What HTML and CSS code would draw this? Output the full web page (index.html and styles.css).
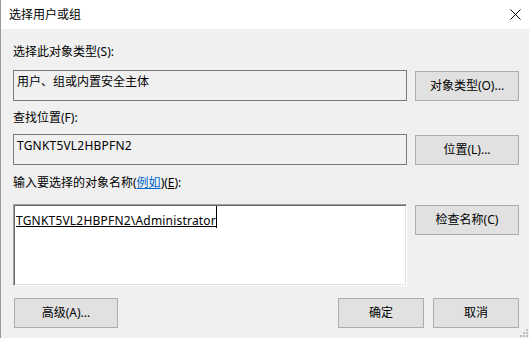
FILE: index.html
```html
<!DOCTYPE html>
<html lang="zh-CN">
<head>
<meta charset="utf-8">
<title>选择用户或组</title>
<link rel="stylesheet" href="styles.css">
</head>
<body>
<div class="window">
  <div class="titlebar">
    <span class="title">选择用户或组</span>
    <svg class="close" width="11" height="11" viewBox="0 0 11 11"><path d="M0.5 0.5 L10.5 10.5 M10.5 0.5 L0.5 10.5" stroke="#000" stroke-width="1" fill="none"/></svg>
  </div>
  <div class="content">
    <div class="label l1">选择此对象类型(S):</div>
    <div class="row r1">
      <div class="field">用户、组或内置安全主体</div>
      <button class="btn side">对象类型(O)...</button>
    </div>
    <div class="label l2">查找位置(F):</div>
    <div class="row r2">
      <div class="field"><span class="latin">TGNKT5VL2HBPFN2</span></div>
      <button class="btn side">位置(L)...</button>
    </div>
    <div class="label l3">输入要选择的对象名称(<a class="link">例如</a>)(<span class="key">E</span>):</div>
    <div class="row r3">
      <div class="editor"><span class="resolved latin">TGNKT5VL2HBPFN2\Administrator</span><span class="caret"></span></div>
      <button class="btn side">检查名称(C)</button>
    </div>
    <div class="footer">
      <button class="btn advanced">高级(A)...</button>
      <div class="actions">
        <button class="btn action">确定</button>
        <button class="btn action">取消</button>
      </div>
    </div>
  </div>
  <svg class="grip" width="8" height="8" viewBox="0 0 8 8"><g fill="#bcbcbc"><rect x="6" y="0" width="2" height="2"/><rect x="3" y="3" width="2" height="2"/><rect x="6" y="3" width="2" height="2"/><rect x="0" y="6" width="2" height="2"/><rect x="3" y="6" width="2" height="2"/><rect x="6" y="6" width="2" height="2"/></g></svg>
</div>
</body>
</html>
```

FILE: styles.css
```css
html, body {
  margin: 0;
  padding: 0;
}
body {
  width: 529px;
  height: 338px;
  overflow: hidden;
  background: #f0f0f0;
  font-family: "Noto Sans", "Noto Sans CJK SC", sans-serif;
  font-size: 12px;
  line-height: 16px;
  color: #000;
}
.window {
  position: relative;
  height: 338px;
  box-sizing: border-box;
  border-left: 1px solid #999;
  background: #f0f0f0;
}
.titlebar {
  height: 29px;
  background: #fff;
  display: flex;
  align-items: center;
  justify-content: space-between;
  padding: 0 8px 0 8px;
}
.title {
  line-height: 16px;
}
.close {
  display: block;
}
.content {
  padding: 15px 0 0 12px;
}
.label {
  height: 16px;
  white-space: nowrap;
}
.l2 { margin-top: 9px; }
.l3 { margin-top: 10px; }
.row {
  display: flex;
  align-items: flex-start;
  gap: 8px;
}
.r1 { margin-top: 10px; }
.r2 { margin-top: 8px; }
.r3 { margin-top: 13px; }
.field {
  width: 394px;
  height: 31px;
  box-sizing: border-box;
  border: 1px solid #7a7a7a;
  padding: 3px 3px;
  white-space: nowrap;
}
.latin {
  letter-spacing: 0.2px;
}
.btn {
  font: inherit;
  color: #000;
  background: #e1e1e1;
  border: 1px solid #adadad;
  margin: 0;
  padding: 0;
  height: 30px;
  box-sizing: border-box;
  display: flex;
  align-items: center;
  justify-content: center;
  white-space: nowrap;
}
.side {
  width: 104px;
  margin-top: 1px;
}
.link {
  color: #0066cc;
  text-decoration: underline;
}
.key {
  text-decoration: underline;
}
.editor {
  width: 394px;
  height: 82px;
  box-sizing: border-box;
  background: #fff;
  border: 1px solid;
  border-color: #a0a0a0 #ffffff #ffffff #a0a0a0;
  box-shadow: inset 1px 1px 0 #696969, inset -1px -1px 0 #e3e3e3;
  padding: 8px 2px 0 2px;
  white-space: nowrap;
}
.resolved {
  text-decoration: underline;
}
.caret {
  display: inline-block;
  width: 1px;
  height: 22px;
  background: #000;
  vertical-align: -3px;
  margin-top: -8px;
}
.footer {
  margin-top: 12px;
  display: flex;
  justify-content: space-between;
  width: 506px;
}
.advanced {
  width: 104px;
  margin-left: 1px;
}
.actions {
  display: flex;
  gap: 9px;
}
.action {
  width: 86px;
}
.grip {
  position: absolute;
  right: 1px;
  bottom: 1px;
}
```
